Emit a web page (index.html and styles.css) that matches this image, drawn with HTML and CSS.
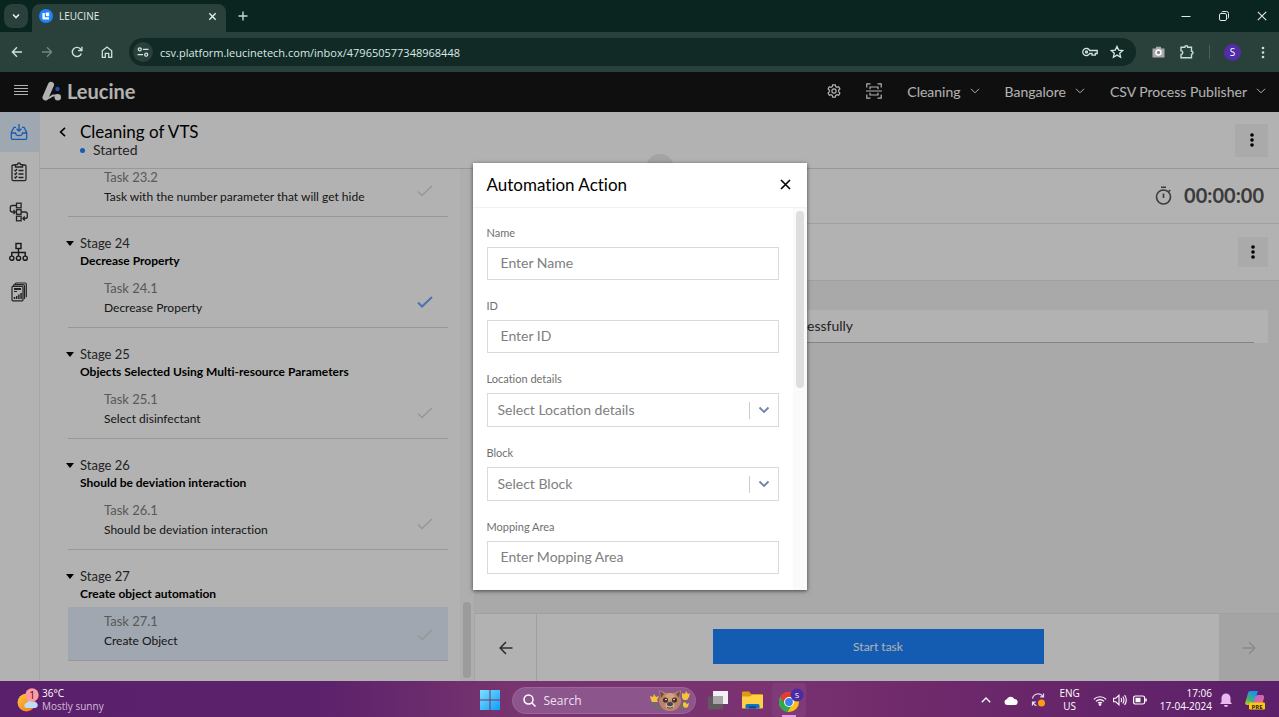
FILE: index.html
```html
<!DOCTYPE html>
<html lang="en">
<head>
  <meta charset="UTF-8" />
  <meta name="viewport" content="width=device-width, initial-scale=1" />
  <title>LEUCINE</title>
  <link rel="stylesheet" href="styles.css">
</head>
<body>
<div class="tab-strip">
  <button class="tab-search" aria-label="Search tabs">
    <svg width="10" height="10" viewBox="0 0 10 10"><path d="M2 3.5l3 3 3-3" fill="none" stroke="#e3eeea" stroke-width="1.6"/></svg>
  </button>
  <div class="tab">
    <svg width="14" height="14" viewBox="0 0 14 14"><circle cx="7" cy="7" r="7" fill="#1d84ff"/><path d="M3.4 4h2.4v4.2H10v2.2H4.6a1.2 1.2 0 0 1-1.2-1.2z" fill="#fff"/><path d="M6.8 3.4h3.4v3.8H8a1.2 1.2 0 0 1-1.2-1.2z" fill="#fff"/></svg>
    <span class="tab-title">LEUCINE</span>
    <button class="icon-btn" aria-label="Close tab">
      <svg width="9" height="9" viewBox="0 0 9 9"><path d="M1.3 1.3l6.4 6.4M7.7 1.3L1.3 7.7" stroke="#e3eeea" stroke-width="1.4"/></svg>
    </button>
  </div>
  <button class="icon-btn new-tab" aria-label="New tab">
    <svg width="10" height="10" viewBox="0 0 10 10"><path d="M5 .5v9M.5 5h9" stroke="#c6d8d2" stroke-width="1.4"/></svg>
  </button>
  <div class="window-buttons">
    <button class="icon-btn" aria-label="Minimize"><svg width="10" height="10" viewBox="0 0 10 10"><path d="M.5 5.5h9" stroke="#e8e8e8"/></svg></button>
    <button class="icon-btn" aria-label="Restore"><svg width="10" height="10" viewBox="0 0 10 10" fill="none" stroke="#e8e8e8"><rect x=".5" y="2.5" width="7" height="7" rx="1.4"/><path d="M2.5 1.2Q3 .5 4 .5h3.5a2 2 0 0 1 2 2V6q0 1-.7 1.5"/></svg></button>
    <button class="icon-btn" aria-label="Close"><svg width="10" height="10" viewBox="0 0 10 10"><path d="M.8.8l8.4 8.4M9.2.8L.8 9.2" stroke="#e8e8e8" stroke-width="1.1"/></svg></button>
  </div>
</div>

<div class="toolbar">
  <div class="toolbar-nav">
    <button class="icon-btn" aria-label="Back"><svg width="12" height="12" viewBox="0 0 12 12" fill="none" stroke="#c9e2da" stroke-width="1.4"><path d="M11 6H1.6M6 1.2L1.4 6 6 10.8"/></svg></button>
    <button class="icon-btn" aria-label="Forward"><svg width="12" height="12" viewBox="0 0 12 12" fill="none" stroke="#728680" stroke-width="1.4"><path d="M1 6h9.4M6 1.2L10.6 6 6 10.8"/></svg></button>
    <button class="icon-btn" aria-label="Reload"><svg width="12" height="12" viewBox="0 0 12 12" fill="none" stroke="#c9e2da" stroke-width="1.4"><path d="M10.3 7.5A4.6 4.6 0 1 1 9.5 3L10.6 4.2"/><path d="M10.9 .8v3.7H7.2"/></svg></button>
    <button class="icon-btn" aria-label="Home"><svg width="12" height="12" viewBox="0 0 12 12" fill="none" stroke="#c9e2da" stroke-width="1.3"><path d="M1.3 4.8L6 1l4.7 3.8v6.5H7.7v-4H4.3v4h-3z"/></svg></button>
  </div>
  <div class="address-bar">
    <button class="site-info" aria-label="Site information">
      <svg width="12" height="12" viewBox="0 0 12 12" fill="none" stroke="#d5e5df" stroke-width="1.3"><circle cx="2.8" cy="3.3" r="1.5"/><path d="M6 3.3h5.5M.5 8.7H6"/><circle cx="9.2" cy="8.7" r="1.5"/></svg>
    </button>
    <input class="url" type="text" aria-label="Address" value="csv.platform.leucinetech.com/inbox/479650577348968448">
    <svg width="16" height="12" viewBox="0 0 16 12" fill="none" stroke="#d5e5df" stroke-width="1.3"><path d="M7.6 4.5A3.6 3.6 0 1 0 7.6 7.5H10v1.7h3.3V7.5h1.9v-3z"/><circle cx="4.5" cy="6" r="1"/></svg>
    <svg width="14" height="14" viewBox="0 0 14 14" fill="none" stroke="#d5e5df" stroke-width="1.3"><path d="M7 1.4l1.7 3.7 4 .4-3 2.7.9 4L7 10.1l-3.6 2.1.9-4-3-2.7 4-.4z"/></svg>
  </div>
  <div class="toolbar-right">
    <svg width="13" height="12" viewBox="0 0 13 12"><path d="M.5 2.5h3l.8-1.7h4.4l.8 1.7h3v9H.5z" fill="#a9a9a9"/><circle cx="6.5" cy="6.5" r="2.5" fill="#8a8a8a" stroke="#fff" stroke-width="1.5"/></svg>
    <svg width="16" height="16" viewBox="0 0 16 16" fill="none" stroke="#bfe0d5" stroke-width="1.4"><path d="M2 3.2h3.8a1.5 1.5 0 0 1 3 0h3.7v4a1.5 1.5 0 0 1 0 3v3.6H2v-3.4a1.8 1.8 0 0 0 0-3.6z"/></svg>
    <span class="toolbar-divider"></span>
    <span class="avatar">S</span>
    <svg class="browser-menu" width="4" height="13" viewBox="0 0 4 13" fill="#c9e2da"><circle cx="2" cy="2" r="1.3"/><circle cx="2" cy="6.5" r="1.3"/><circle cx="2" cy="11" r="1.3"/></svg>
  </div>
</div>

<div class="app">
  <header class="app-header">
    <button class="icon-btn" aria-label="Menu"><svg width="14" height="14" viewBox="0 0 14 14"><path d="M0 1.5h14M0 4.5h14M0 7.5h14M0 10.5h14" stroke="#fff"/></svg></button>
    <a class="brand" href="#">
      <svg width="20" height="20" viewBox="0 0 20 20"><path d="M3.5 16.5L9 3.8" stroke="#fff" stroke-width="6" stroke-linecap="round"/><path d="M6 17.5l5-3h4" stroke="#fff" stroke-width="2" fill="none"/><circle cx="15.8" cy="16.2" r="3.2" fill="#fff"/><circle cx="15.5" cy="8" r="2.2" fill="#2f6fff"/></svg>
      <span>Leucine</span>
    </a>
    <div class="app-menu">
      <button class="icon-btn" aria-label="Settings"><svg width="14" height="14" viewBox="0 0 14 14" fill="none" stroke="#fff" stroke-width="1.2"><path d="M5.7 .8h2.6l.4 1.7 1.3.8 1.7-.6 1.2 2.2-1.2 1.2v1.7l1.2 1.3-1.2 2.2-1.7-.6-1.3.8-.4 1.7H5.7l-.4-1.7-1.3-.8-1.7.6-1.2-2.2 1.2-1.3V6.1L1.1 4.900l1.200-2.200 1.700.6 1.300-.8z"/><circle cx="7" cy="7" r="2.1"/></svg></button>
      <button class="icon-btn" aria-label="Scan"><svg width="16" height="16" viewBox="0 0 16 16" fill="none" stroke="#fff" stroke-width="1.2"><path d="M.8 4.5V.8h3.7M11.5 .8h3.7v3.7M15.2 11.5v3.7h-3.7M4.500 15.200H.8v-3.700M0 8h16M4 6.300V4h8v2.300M4 9.700V12h8V9.700"/></svg></button>
      <button class="menu-btn">Cleaning <svg width="10" height="6" viewBox="0 0 10 6"><path d="M1 .8l4 4 4-4" fill="none" stroke="#fff"/></svg></button>
      <button class="menu-btn">Bangalore <svg width="10" height="6" viewBox="0 0 10 6"><path d="M1 .8l4 4 4-4" fill="none" stroke="#fff"/></svg></button>
      <button class="menu-btn">CSV Process Publisher <svg width="10" height="6" viewBox="0 0 10 6"><path d="M1 .8l4 4 4-4" fill="none" stroke="#fff"/></svg></button>
    </div>
  </header>

  <div class="app-body">
    <nav class="side-nav">
      <a href="#" class="active" aria-label="Inbox"><svg width="18" height="18" viewBox="0 0 18 18" fill="none" stroke="#1d84ff" stroke-width="1.3"><path d="M9 1v7M6.5 5.7L9 8.2l2.5-2.5M6 4.3H4L1.3 9.5v5.8q0 1 1 1h13.4q1 0 1-1V9.500L14 4.300h-2M1.300 10h4.200q.5 2.700 3.500 2.700t3.500-2.700h4.200"/></svg></a>
      <a href="#" aria-label="Checklists"><svg width="18" height="20" viewBox="0 0 18 20" fill="none" stroke="#333" stroke-width="1.3"><path d="M5.5 3H3.3q-1.3 0-1.3 1.3v13q0 1.300 1.300 1.300h11.400q1.300 0 1.300-1.300v-13Q16 3 14.700 3h-2.200M5.500 5V2.700h2q0-1.700 1.500-1.700t1.500 1.700h2V5zM4.500 8l1 1 1.500-2M4.500 11.500l1 1 1.500-2M4.500 15l1 1 1.500-2M8.500 8.500h5M8.500 12h5M8.500 15.500h5"/></svg></a>
      <a href="#" aria-label="Process flow"><svg width="20" height="20" viewBox="0 0 20 20" fill="none" stroke="#333" stroke-width="1.3"><rect x="7.5" y="1.2" width="4.6" height="4.6"/><rect x="7.5" y="7.7" width="4.6" height="4.6"/><rect x="7.5" y="14.2" width="4.6" height="4.6"/><path d="M7.500 3.500h-4q-2.200 0-2.200 2V8q0 2 2.200 2H6M4.500 8L6.300 10l-1.800 2M12.100 10h4q2.200 0 2.200 2v2.500q0 2-2.200 2h-2M15.700 14.500l-1.800 2 1.800 2"/></svg></a>
      <a href="#" aria-label="Hierarchy"><svg width="19" height="20" viewBox="0 0 19 20" fill="none" stroke="#222" stroke-width="1.4"><rect x="7" y="1.5" width="5" height="5"/><path d="M9.5 6.5V14M2.8 14v-3.500h13.400V14"/><circle cx="2.8" cy="16.2" r="2.1"/><circle cx="9.5" cy="16.2" r="2.1"/><circle cx="16.2" cy="16.2" r="2.1"/></svg></a>
      <a href="#" aria-label="Reports"><svg width="16" height="20" viewBox="0 0 16 20" fill="none" stroke="#333"><path d="M4 2.500Q4 1 5.500 1H14q1.300 0 1.300 1.300v13M2.500 4V3.500Q2.500 2.600 3.500 2.600H12q1.500 0 1.500 1.500v13" stroke-width="1.2"/><rect x="1" y="4.3" width="11" height="14.5" rx="1" stroke-width="1.2"/><path d="M3 7h7" stroke-width="2"/><path d="M3 9.5h3"/><path d="M3.500 17v-2M5.700 17v-3M7.900 17v-4.500M10.100 17v-6" stroke-width="1.5"/></svg></a>
    </nav>

    <div class="job">
      <div class="job-header">
        <button class="icon-btn job-back" aria-label="Back"><svg width="7" height="10" viewBox="0 0 7 10"><path d="M6 .8L1.6 5 6 9.2" fill="none" stroke="#000" stroke-width="1.6"/></svg></button>
        <div>
          <h1>Cleaning of VTS</h1>
          <p class="job-status">Started</p>
        </div>
        <button class="more-btn more-large" aria-label="Job actions"><svg width="4" height="14" viewBox="0 0 4 14"><circle cx="2" cy="2" r="1.8"/><circle cx="2" cy="7" r="1.8"/><circle cx="2" cy="12" r="1.8"/></svg></button>
        <span class="collapse-knob"></span>
      </div>

      <div class="job-content">
        <div class="task-panel">
          <div class="task-list">
            <a class="task" href="#">
              <span class="task-text"><span class="task-no">Task 23.2</span><span>Task with the number parameter that will get hide</span></span>
              <svg class="check" width="16" height="12" viewBox="0 0 16 12"><path d="M1 6.5L5 10.5 15 1"/></svg>
            </a>
            <div class="stage"><span class="stage-no">Stage 24</span><strong>Decrease Property</strong></div>
            <a class="task" href="#">
              <span class="task-text"><span class="task-no">Task 24.1</span><span>Decrease Property</span></span>
              <svg class="check done" width="16" height="12" viewBox="0 0 16 12"><path d="M1 6.5L5 10.5 15 1"/></svg>
            </a>
            <div class="stage"><span class="stage-no">Stage 25</span><strong>Objects Selected Using Multi-resource Parameters</strong></div>
            <a class="task" href="#">
              <span class="task-text"><span class="task-no">Task 25.1</span><span>Select disinfectant</span></span>
              <svg class="check" width="16" height="12" viewBox="0 0 16 12"><path d="M1 6.5L5 10.5 15 1"/></svg>
            </a>
            <div class="stage"><span class="stage-no">Stage 26</span><strong>Should be deviation interaction</strong></div>
            <a class="task" href="#">
              <span class="task-text"><span class="task-no">Task 26.1</span><span>Should be deviation interaction</span></span>
              <svg class="check" width="16" height="12" viewBox="0 0 16 12"><path d="M1 6.5L5 10.5 15 1"/></svg>
            </a>
            <div class="stage"><span class="stage-no">Stage 27</span><strong>Create object automation</strong></div>
            <a class="task selected" href="#">
              <span class="task-text"><span class="task-no">Task 27.1</span><span>Create Object</span></span>
              <svg class="check" width="16" height="12" viewBox="0 0 16 12"><path d="M1 6.5L5 10.5 15 1"/></svg>
            </a>
          </div>
          <div class="scroll-track at-end"><span class="scroll-thumb short"></span></div>
        </div>

        <main class="task-view">
          <div class="timer-row">
            <svg width="17" height="19" viewBox="0 0 17 19" fill="none" stroke="#555" stroke-width="1.6"><circle cx="8.5" cy="11" r="7"/><path d="M6 1.2h5M8.5 7.5V12M13.6 5.6l1.6-1.6"/></svg>
            <span class="timer">00:00:00</span>
          </div>
          <div class="task-row">
            <button class="more-btn" aria-label="Task actions"><svg width="4" height="14" viewBox="0 0 4 14"><circle cx="2" cy="2" r="1.8"/><circle cx="2" cy="7" r="1.8"/><circle cx="2" cy="12" r="1.8"/></svg></button>
          </div>
          <div class="task-content">
            <div class="message"><p>successfully</p></div>
          </div>
          <footer class="task-footer">
            <button class="step-btn" aria-label="Previous task"><svg width="14" height="14" viewBox="0 0 14 14"><path d="M13.5 7h-12M7 1L1.2 7 7 13" fill="none" stroke="#444" stroke-width="1.6"/></svg></button>
            <div class="footer-main"><button class="start-btn">Start task</button></div>
            <button class="step-btn next" aria-label="Next task" disabled><svg width="14" height="14" viewBox="0 0 14 14"><path d="M.5 7h12M7 1l5.8 6L7 13" fill="none" stroke="#c8c8c8" stroke-width="1.6"/></svg></button>
          </footer>
        </main>
      </div>
    </div>
  </div>

  <div class="modal-backdrop">
    <div class="modal" role="dialog" aria-labelledby="modal-title">
      <div class="modal-header">
        <h2 id="modal-title">Automation Action</h2>
        <button class="icon-btn" aria-label="Close dialog"><svg width="11" height="11" viewBox="0 0 11 11"><path d="M1 1l9 9M10 1l-9 9" stroke="#000" stroke-width="1.6"/></svg></button>
      </div>
      <div class="modal-body">
        <form class="fields">
          <div class="field">
            <label for="name">Name</label>
            <input id="name" type="text" placeholder="Enter Name">
          </div>
          <div class="field">
            <label for="object-id">ID</label>
            <input id="object-id" type="text" placeholder="Enter ID">
          </div>
          <div class="field">
            <label for="location">Location details</label>
            <div class="select-box">
              <select id="location"><option>Select Location details</option></select>
              <span class="select-arrow"><svg width="12" height="8" viewBox="0 0 12 8"><path d="M1.5 1.5L6 6l4.5-4.5" fill="none" stroke="#7484ab" stroke-width="1.9"/></svg></span>
            </div>
          </div>
          <div class="field">
            <label for="block">Block</label>
            <div class="select-box">
              <select id="block"><option>Select Block</option></select>
              <span class="select-arrow"><svg width="12" height="8" viewBox="0 0 12 8"><path d="M1.5 1.5L6 6l4.5-4.5" fill="none" stroke="#7484ab" stroke-width="1.9"/></svg></span>
            </div>
          </div>
          <div class="field">
            <label for="mopping">Mopping Area</label>
            <input id="mopping" type="text" placeholder="Enter Mopping Area">
          </div>
        </form>
        <div class="scroll-track"><span class="scroll-thumb"></span></div>
      </div>
    </div>
  </div>
</div>

<div class="taskbar">
  <div class="weather">
    <svg width="22" height="24" viewBox="0 0 22 24"><defs><linearGradient id="sun" x1="0" y1="0" x2="1" y2="1"><stop offset="0" stop-color="#fdc93a"/><stop offset="1" stop-color="#f0741c"/></linearGradient></defs><circle cx="9.5" cy="14.5" r="9" fill="url(#sun)"/><path d="M10 20a2.6 2.6 0 0 1 0-5.2 3.6 3.6 0 0 1 6.6-.6 3 3 0 0 1 2 5.8z" fill="#bcdcfa"/><circle cx="15" cy="7" r="6.7" fill="#ff9aa2"/><text x="15" y="11" text-anchor="middle" class="badge-text">1</text></svg>
    <div class="weather-text"><span>36°C</span><span class="muted">Mostly sunny</span></div>
  </div>
  <div class="task-icons">
    <button class="icon-btn" aria-label="Start"><svg width="20" height="20" viewBox="0 0 20 20"><defs><linearGradient id="win" x1="0" y1="0" x2="1" y2="1"><stop offset="0" stop-color="#7be0ff"/><stop offset="1" stop-color="#139df5"/></linearGradient></defs><path d="M0 0h9.5v9.5H0zM10.5 0H20v9.5h-9.5zM0 10.5h9.5V20H0zM10.5 10.5H20V20h-9.5z" fill="url(#win)"/></svg></button>
    <div class="search">
      <svg width="13" height="13" viewBox="0 0 13 13" fill="none" stroke="#fff" stroke-width="1.5"><circle cx="5.5" cy="5.5" r="4.5"/><path d="M9 9l3.5 3.5"/></svg>
      <input type="text" aria-label="Search" placeholder="Search">
      <svg width="42" height="22" viewBox="0 0 42 22">
        <path d="M5 10q0 7 6 10M37 8q-1 8-6 12M36 16l-4 3" fill="none" stroke="#4d8a3b" stroke-width="1.5"/>
        <path d="M10 1l7 3h8l7-3-1 7q2 4 0 8-3 6-10 6t-10-6q-2-4 0-8z" fill="#b98567"/>
        <path d="M11 2l4 3-3 4zM31 2l-4 3 3 4z" fill="#6b4b45"/><ellipse cx="21" cy="8" rx="5" ry="4" fill="#d3a17c"/>
        <circle cx="16.5" cy="11" r="2.6" fill="#4b2c27"/><circle cx="25.5" cy="11" r="2.6" fill="#4b2c27"/><circle cx="17" cy="10.5" r=".8" fill="#fff"/><circle cx="25" cy="10.5" r=".8" fill="#fff"/>
        <ellipse cx="21" cy="16.5" rx="4.5" ry="3.5" fill="#d0ab98"/><ellipse cx="21" cy="15" rx="3" ry="2" fill="#3f4552"/><path d="M18 18.5q3 1.500 6 0" stroke="#5e3a32" fill="none"/>
        <path d="M1 7l3 1 1-3 2 3 3-1-2 4 1 2H3l-1-2zM33 4l3 1 1-3 2 3 2-1-1 4-2 3h-3l-2-2zM34 14l2-1 2 2 2-1-1 4-3 1-2-2z" fill="#f6c23c"/>
      </svg>
    </div>
    <button class="icon-btn" aria-label="Task view"><svg width="20" height="19" viewBox="0 0 20 19"><rect x="5" y="0" width="15" height="13" fill="#f3f0f3"/><rect x="0" y="5.5" width="15" height="13" fill="#62595f"/><rect x="5" y="5.5" width="10" height="7.5" fill="#aaa5a9"/></svg></button>
    <button class="icon-btn" aria-label="File Explorer"><svg width="21" height="18" viewBox="0 0 21 18"><path d="M0 1.5Q0 .5 1 .5h6l2 2.5h11q1 0 1 1V9H0z" fill="#dd9a10"/><path d="M0 5.5h8l2-1.5h11v12.5q0 1-1 1H1q-1 0-1-1z" fill="#ffcf47"/><path d="M3.5 17.5v-3q0-1.5 1.5-1.5h11q1.5 0 1.5 1.5v3z" fill="#0f74c4"/><path d="M7 15h7v2.5H7z" fill="#0a4f94"/></svg></button>
    <button class="chrome-btn" aria-label="Chrome">
      <svg width="26" height="25" viewBox="0 0 26 25"><circle cx="11" cy="14" r="10" fill="#fbc116"/><path d="M11 14L2.3 9a10 10 0 0 0 7.2 14.9L14 17z" fill="#2da94f"/><path d="M2.3 9A10 10 0 0 1 19.7 9H11l-4 7z" fill="#e33b2e"/><circle cx="11" cy="14" r="4.9" fill="#fff"/><circle cx="11" cy="14" r="3.9" fill="#3b7ded"/><circle cx="19" cy="7" r="6.5" fill="#4b2ba3"/><text x="19" y="10" text-anchor="middle" class="profile-text">S</text></svg>
    </button>
  </div>
  <div class="tray">
    <svg width="10" height="6" viewBox="0 0 10 6"><path d="M.8 5.2L5 1l4.2 4.2" fill="none" stroke="#fff" stroke-width="1.3"/></svg>
    <svg width="14" height="9" viewBox="0 0 14 9"><path d="M3 9a2.9 2.9 0 0 1-.3-5.7A4.2 4.2 0 0 1 10.3 3 3 3 0 0 1 11 9z" fill="#fff"/></svg>
    <svg width="15" height="16" viewBox="0 0 15 16"><path d="M1.5 6.5A5.8 5.8 0 0 1 12 4.5M12.5 1.5v3.3H9.2M5.5 13.8A6 6 0 0 1 2 10.5M1.5 13.5v-3.3h3.3" fill="none" stroke="#e8dcec" stroke-width="1.2"/><circle cx="10.5" cy="11" r="3.5" fill="#ff9b0f"/></svg>
    <div class="language"><span>ENG</span><span>US</span></div>
    <div class="status">
      <svg width="14" height="11" viewBox="0 0 14 11" fill="none" stroke="#fff" stroke-width="1.1"><path d="M.8 4.3a8.8 8.8 0 0 1 12.4 0M2.9 6.3a5.8 5.8 0 0 1 8.2 0M5 8.2a2.8 2.8 0 0 1 4 0"/><circle cx="7" cy="9.5" r=".8" fill="#fff"/></svg>
      <svg width="14" height="12" viewBox="0 0 14 12" fill="none" stroke="#fff" stroke-width="1.1"><path d="M.6 4.2h2.2L6 1.2v9.6L2.8 7.8H.6zM8 4q1.3 2 0 4M9.8 2.5q2.4 3.5 0 7M11.6 1q3.4 5 0 10"/></svg>
      <svg width="14" height="10" viewBox="0 0 14 10"><rect x=".6" y="1" width="11" height="8" rx="1.8" fill="none" stroke="#fff" stroke-width="1.2"/><path d="M2.5 2.8h5v4.4h-5z" fill="#fff"/><path d="M13 3.5v3" stroke="#fff" stroke-width="1.5"/></svg>
    </div>
    <div class="clock"><span>17:06</span><span>17-04-2024</span></div>
    <svg width="12" height="14" viewBox="0 0 12 14"><path d="M0 11l1.5-2V5a4.5 4.5 0 0 1 9 0v4L12 11zM4 12h4a2 2 0 0 1-4 0z" fill="#eab8f0"/></svg>
    <svg width="20" height="20" viewBox="0 0 20 20"><defs><linearGradient id="cp" x1="0" y1="1" x2=".6" y2="0"><stop offset="0" stop-color="#f2c21b"/><stop offset=".4" stop-color="#3fb56a"/><stop offset="1" stop-color="#1a8ff0"/></linearGradient><linearGradient id="cq" x1="0" y1="0" x2="1" y2="1"><stop offset="0" stop-color="#a863f0"/><stop offset="1" stop-color="#fb6a6a"/></linearGradient></defs><path d="M5 1h8l-4 12q-.7 2-3 2H2q-2.3 0-1.5-3L3 3q.6-2 2-2z" fill="url(#cp)"/><path d="M13 5h4q2.5 0 2 3l-2 7H8l2-8q.7-2 3-2z" fill="url(#cq)"/><rect x="4" y="12.5" width="16" height="7" rx="1" fill="#fdc90e"/><text x="12" y="18.5" text-anchor="middle" class="pre-text">PRE</text></svg>
  </div>
</div>
</body>
</html>
```
FILE: styles.css
```css
* {
  box-sizing: border-box;
}
body {
  margin: 0;
  height: 100vh;
  display: flex;
  flex-direction: column;
  overflow: hidden;
  font-family: 'Lato', sans-serif;
  font-size: 13px;
  font-variant-ligatures: none;
  color: #333;
}
button, input, select {
  font-family: inherit;
  border: none;
  background: none;
  padding: 0;
  margin: 0;
}
a {
  color: inherit;
  text-decoration: none;
}
h1, h2, p {
  margin: 0;
  font-weight: 400;
}
svg {
  display: block;
  flex-shrink: 0;
}
.icon-btn {
  display: flex;
  align-items: center;
  justify-content: center;
  flex-shrink: 0;
}

/* browser chrome */
.tab-strip {
  display: flex;
  align-items: center;
  height: 32px;
  flex-shrink: 0;
  padding: 0 12px 0 4px;
  background: #0a2420;
  font-family: 'Open Sans', sans-serif;
}
.tab-search {
  width: 24px;
  height: 24px;
  border-radius: 8px;
  background: #29403b;
  display: flex;
  align-items: center;
  justify-content: center;
}
.tab {
  align-self: flex-end;
  width: 194px;
  height: 28px;
  margin-left: 4px;
  padding: 0 9px 4px 7px;
  border-radius: 8px 8px 0 0;
  background: #29403b;
  display: flex;
  align-items: center;
  gap: 6px;
}
.tab-title {
  flex: 1;
  font-size: 10px;
  color: #e3eeea;
}
.new-tab {
  margin-left: 12px;
}
.window-buttons {
  margin-left: auto;
  display: flex;
  gap: 28px;
}
.toolbar {
  display: flex;
  align-items: center;
  height: 40px;
  flex-shrink: 0;
  padding: 0 14px 0 11px;
  background: #29403b;
  font-family: 'Open Sans', sans-serif;
}
.toolbar-nav {
  display: flex;
  gap: 18px;
}
.address-bar {
  flex: 1;
  display: flex;
  align-items: center;
  gap: 12px;
  height: 28px;
  margin: 0 16px;
  padding: 0 12px 0 4px;
  border-radius: 14px;
  background: #112a26;
}
.site-info {
  width: 20px;
  height: 20px;
  border-radius: 50%;
  background: #29403b;
  display: flex;
  align-items: center;
  justify-content: center;
}
.url {
  flex: 1;
  margin-left: -5px;
  font-size: 11px;
  color: #dce8e4;
}
.toolbar-right {
  display: flex;
  align-items: center;
  gap: 14px;
}
.toolbar-divider {
  width: 1px;
  height: 14px;
  background: #45615a;
}
.avatar {
  width: 17px;
  height: 17px;
  border-radius: 50%;
  background: #512da8;
  color: #fff;
  font-size: 10px;
  line-height: 17px;
  text-align: center;
}
.browser-menu {
  margin-left: 6px;
}

/* app */
.app {
  flex: 1;
  min-height: 0;
  position: relative;
  display: flex;
  flex-direction: column;
  background: #fff;
}
.app-header {
  display: flex;
  align-items: center;
  height: 40px;
  flex-shrink: 0;
  padding: 0 13px 2px 14px;
  background: #161616;
  color: #fff;
}
.brand {
  display: flex;
  align-items: center;
  gap: 5px;
  margin-left: 14px;
  font-size: 20px;
  font-weight: 700;
}
.app-menu {
  margin-left: auto;
  display: flex;
  align-items: center;
  gap: 25px;
}
.menu-btn {
  display: flex;
  align-items: center;
  gap: 9px;
  color: #fff;
  font-size: 14px;
}
.app-body {
  flex: 1;
  min-height: 0;
  display: flex;
}
.side-nav {
  width: 40px;
  flex-shrink: 0;
  border-right: 1px solid #eee;
}
.side-nav a {
  height: 40px;
  padding-right: 2px;
  display: flex;
  align-items: center;
  justify-content: center;
}
.side-nav a.active {
  background: #e4effc;
}
.job {
  flex: 1;
  min-width: 0;
  display: flex;
  flex-direction: column;
}
.job-header {
  position: relative;
  display: flex;
  align-items: center;
  height: 57px;
  flex-shrink: 0;
  padding: 0 11px 0 19px;
  border-bottom: 1px solid #dadada;
}
.job-back {
  align-self: flex-start;
  margin: 15px 14px 0 0;
}
.job-header h1 {
  font-size: 17px;
  line-height: 20px;
  color: #000;
}
.job-status {
  display: flex;
  align-items: center;
  gap: 8px;
  line-height: 16px;
  font-size: 14px;
}
.job-status::before {
  content: '';
  width: 5px;
  height: 5px;
  border-radius: 50%;
  background: #1d84ff;
}
.more-btn {
  width: 30px;
  height: 30px;
  margin-left: auto;
  background: #f4f4f4;
  display: flex;
  align-items: center;
  justify-content: center;
}
.more-large {
  width: 33px;
  height: 33px;
}
.collapse-knob {
  position: absolute;
  left: 50%;
  bottom: -14px;
  width: 28px;
  height: 28px;
  margin-left: -14px;
  border-radius: 50%;
  background: #ebebeb;
}
.job-content {
  flex: 1;
  min-height: 0;
  display: flex;
}
.task-panel {
  width: 434px;
  flex-shrink: 0;
  display: flex;
}
.task-list {
  flex: 1;
  min-width: 0;
  display: flex;
  flex-direction: column;
  justify-content: flex-end;
  overflow: hidden;
  padding: 0 12px 20px 28px;
  font-size: 12px;
}
.stage {
  position: relative;
  flex-shrink: 0;
  display: flex;
  flex-direction: column;
  padding: 18px 0 5px 12px;
  line-height: 17px;
}
.stage::before {
  content: '';
  position: absolute;
  left: -2px;
  top: 24px;
  border: 4px solid transparent;
  border-top: 5px solid #000;
  border-bottom: none;
}
.stage strong {
  color: #000;
}
.stage-no, .task-no {
  font-size: 13px;
}
.task {
  flex-shrink: 0;
  display: flex;
  align-items: center;
  justify-content: space-between;
  padding: 4px 15px 9px 36px;
  border-bottom: 1px solid #dadada;
  line-height: 20px;
  color: #222;
}
.task.selected {
  background: #e5effc;
}
.task-text {
  display: flex;
  flex-direction: column;
}
.task-no {
  color: #808080;
}
.check {
  margin-top: 8px;
  fill: none;
  stroke: #d8d8d8;
  stroke-width: 1.5px;
}
.check.done {
  stroke: #6ba6f5;
  stroke-width: 2px;
}
.scroll-track {
  width: 14px;
  flex-shrink: 0;
  display: flex;
  flex-direction: column;
  align-items: center;
  padding: 3px 0;
  background: #fafafa;
}
.scroll-track.at-end {
  justify-content: flex-end;
}
.scroll-thumb {
  width: 8px;
  height: 177px;
  border-radius: 4px;
  background: #dedede;
}
.scroll-thumb.short {
  height: 76px;
}
.task-view {
  flex: 1;
  min-width: 0;
  display: flex;
  flex-direction: column;
  border-left: 1px solid #eee;
  background: #f3f3f3;
}
.timer-row {
  display: flex;
  align-items: center;
  justify-content: flex-end;
  gap: 12px;
  height: 55px;
  flex-shrink: 0;
  padding: 0 15px 2px 0;
  border-bottom: 1px solid #e4e4e4;
  background: #fff;
}
.timer {
  font-size: 20px;
  font-weight: 700;
  color: #555;
}
.task-row {
  display: flex;
  align-items: center;
  height: 57px;
  flex-shrink: 0;
  padding-right: 11px;
  border-bottom: 1px solid #e4e4e4;
  background: #fff;
}
.task-content {
  flex: 1;
  padding: 29px 11px 0 13px;
}
.message {
  padding-right: 14px;
  background: #fff;
}
.message p {
  padding-left: 292px;
  border-bottom: 1px solid #bababa;
  font-size: 14px;
  line-height: 32px;
}
.task-footer {
  display: flex;
  height: 68px;
  border-top: 1px solid #e4e4e4;
  background: #fff;
}
.step-btn {
  width: 62px;
  border-right: 1px solid #e4e4e4;
  display: flex;
  align-items: center;
  justify-content: center;
}
.step-btn.next {
  width: 60px;
  border: none;
  background: #ebebeb;
}
.footer-main {
  flex: 1;
  display: flex;
  align-items: center;
  justify-content: center;
  padding: 0 10px 2px;
}
.start-btn {
  width: 50%;
  height: 35px;
  background: #1d84ff;
  color: #fff;
  font-size: 12px;
}

/* modal */
.modal-backdrop {
  position: absolute;
  inset: 0;
  display: flex;
  align-items: center;
  justify-content: center;
  background: rgba(0,0,0,0.3);
}
.modal {
  width: 334px;
  background: #fff;
  box-shadow: 0 1px 4px rgba(0,0,0,0.6);
}
.modal-header {
  display: flex;
  align-items: center;
  justify-content: space-between;
  height: 45px;
  padding: 0 16px 2px 14px;
  border-bottom: 1px solid #f2f2f2;
}
.modal-header h2 {
  font-size: 17px;
  color: #000;
}
.modal-body {
  display: flex;
}
.fields {
  flex: 1;
  display: flex;
  flex-direction: column;
  gap: 18px;
  padding: 17px 14px 16px 14px;
}
.field {
  display: flex;
  flex-direction: column;
  gap: 6px;
}
.field label {
  font-size: 11px;
  line-height: 16px;
  color: #6f6f6f;
}
.field input {
  height: 33px;
  padding: 0 13px 2px;
  border: 1px solid #dadada;
  font-size: 14px;
}
.field input::placeholder {
  color: #808080;
}
.select-box {
  display: flex;
  align-items: center;
  height: 34px;
  border: 1px solid #dadada;
}
.select-box select {
  flex: 1;
  appearance: none;
  padding: 0 0 2px 10px;
  font-size: 14px;
  color: #808080;
}
.select-arrow {
  width: 29px;
  height: 17px;
  border-left: 1px solid #ccc;
  display: flex;
  align-items: center;
  justify-content: center;
}

/* taskbar */
.taskbar {
  display: grid;
  grid-template-columns: 1fr auto 1fr;
  align-items: center;
  height: 36px;
  flex-shrink: 0;
  padding: 2px 14px 0 20px;
  background: linear-gradient(90deg, #5b206b, #5c216b 25%, #77346f 40%, #7a3270 60%, #6c286a 75%, #5b2069);
  color: #fff;
  font-family: 'Open Sans', sans-serif;
  font-size: 10px;
  line-height: 13px;
}
.weather {
  display: flex;
  align-items: center;
  gap: 3px;
  margin-left: -3px;
}
.weather-text {
  display: flex;
  flex-direction: column;
}
.muted {
  color: #d3bcd8;
}
.badge-text {
  font-size: 10px;
  fill: #222;
}
.profile-text {
  font-size: 8px;
  fill: #fff;
}
.pre-text {
  font-size: 6px;
  font-weight: 700;
  fill: #222;
}
.task-icons {
  display: flex;
  align-items: center;
  gap: 14px;
}
.search {
  display: flex;
  align-items: center;
  width: 184px;
  height: 27px;
  margin: 0 -2px;
  padding: 0 4px 0 10px;
  border: 1px solid #9b679b;
  border-radius: 14px;
  background: #8c558c;
}
.search input {
  flex: 1;
  min-width: 0;
  padding-left: 8px;
  font-size: 12px;
  color: #fff;
}
.search input::placeholder {
  color: #efe0f0;
}
.chrome-btn {
  width: 34px;
  height: 34px;
  margin-left: -5px;
  padding-left: 6px;
  border-radius: 4px;
  background: linear-gradient(#e59ce9, #e59ce9) center bottom / 14px 2px no-repeat #7f3a78;
}
.tray {
  justify-self: end;
  display: flex;
  align-items: center;
  gap: 13px;
}
.language {
  display: flex;
  flex-direction: column;
  text-align: center;
}
.status {
  display: flex;
  align-items: center;
  gap: 6px;
}
.clock {
  display: flex;
  flex-direction: column;
  margin-right: -5px;
  text-align: right;
}
```
